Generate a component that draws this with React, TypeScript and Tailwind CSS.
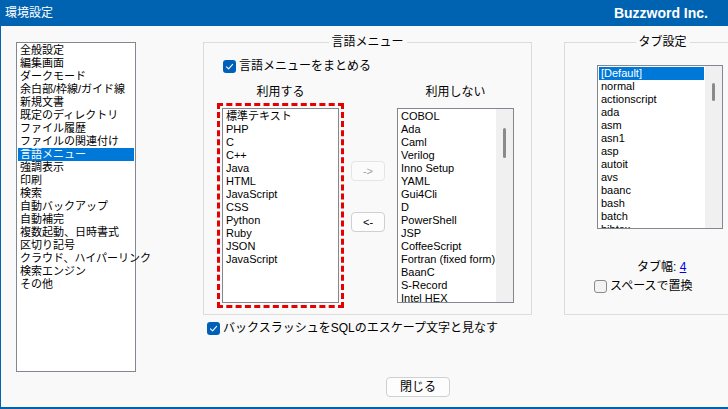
import { FC, ReactNode } from "react";

const FONT = "font-['Liberation_Sans','Noto_Sans_CJK_JP',sans-serif]";

const generalItems = [
  "全般設定",
  "編集画面",
  "ダークモード",
  "余白部/枠線/ガイド線",
  "新規文書",
  "既定のディレクトリ",
  "ファイル履歴",
  "ファイルの関連付け",
  "言語メニュー",
  "強調表示",
  "印刷",
  "検索",
  "自動バックアップ",
  "自動補完",
  "複数起動、日時書式",
  "区切り記号",
  "クラウド、ハイパーリンク",
  "検索エンジン",
  "その他",
];

const usedLangs = [
  "標準テキスト",
  "PHP",
  "C",
  "C++",
  "Java",
  "HTML",
  "JavaScript",
  "CSS",
  "Python",
  "Ruby",
  "JSON",
  "JavaScript",
];

const unusedLangs = [
  "COBOL",
  "Ada",
  "Caml",
  "Verilog",
  "Inno Setup",
  "YAML",
  "Gui4Cli",
  "D",
  "PowerShell",
  "JSP",
  "CoffeeScript",
  "Fortran (fixed form)",
  "BaanC",
  "S-Record",
  "Intel HEX",
];

const tabItems = [
  "[Default]",
  "normal",
  "actionscript",
  "ada",
  "asm",
  "asn1",
  "asp",
  "autoit",
  "avs",
  "baanc",
  "bash",
  "batch",
  "bibtex",
];

const CheckBox: FC<{ checked?: boolean }> = ({ checked }) =>
  checked ? (
    <span className="flex size-[13px] shrink-0 items-center justify-center rounded-[3px] bg-[#005fb8]">
      <svg width="9" height="9" viewBox="0 0 9 9" fill="none">
        <path d="M1.5 4.8 L3.6 6.8 L7.6 2.3" stroke="white" strokeWidth="1.1" strokeLinecap="round" strokeLinejoin="round" />
      </svg>
    </span>
  ) : (
    <span className="size-[13px] shrink-0 rounded-[3px] border border-[#8a8a8a] bg-[#f3f3f3]" />
  );

const ListItem: FC<{ label: string; selected?: boolean }> = ({ label, selected }) => (
  <div
    className={`h-[13px] whitespace-nowrap pl-[2px] leading-[13px] ${
      selected ? "bg-[#0078d7] text-white" : "text-black"
    }`}
  >
    {label}
  </div>
);

const ScrollList: FC<{ items: string[]; selected?: number; className: string; thumbTop: string; thumbHeight: string }> = ({
  items,
  selected,
  className,
  thumbTop,
  thumbHeight,
}) => (
  <div className={`flex overflow-hidden border border-[#828790] bg-white ${className}`}>
    <div className="min-w-0 flex-1 overflow-hidden p-[1px]">
      {items.map((item, i) => (
        <ListItem key={i} label={item} selected={i === selected} />
      ))}
    </div>
    <div className="w-[17px] shrink-0 bg-[#f0f0f0] pl-[7px]">
      <div className={`w-[3px] rounded-full bg-[#8a8a8a] ${thumbTop} ${thumbHeight}`} />
    </div>
  </div>
);

const GroupBox: FC<{ title: string; className: string; children: ReactNode }> = ({ title, className, children }) => (
  <div className={`relative shrink-0 border border-[#dcdcdc] ${className}`}>
    <span className="absolute -top-[7px] left-1/2 -translate-x-1/2 whitespace-nowrap bg-[#f9f9f9] px-[3px] text-[12px] leading-[13px]">
      {title}
    </span>
    {children}
  </div>
);

const SmallButton: FC<{ label: string; disabled?: boolean; className?: string }> = ({ label, disabled, className = "" }) => (
  <button
    className={`flex h-[20px] w-[34px] items-center justify-center rounded-[4px] border text-[11px] ${
      disabled ? "border-[#e5e5e5] bg-[#fbfbfb] text-[#a0a0a0]" : "border-[#d0d0d0] bg-[#fdfdfd] text-black"
    } ${className}`}
  >
    {label}
  </button>
);

const App: FC = () => {
  return (
    <div
      className={`flex h-[409px] w-[728px] flex-col overflow-hidden border-b-2 border-l border-[#0063b1] bg-[#f9f9f9] text-[11px] text-black ${FONT}`}
    >
      {/* title bar */}
      <div className="flex h-[26px] shrink-0 items-center justify-between bg-[#0063b1] pl-[4px] pr-[20px] text-white">
        <span className="text-[12px] leading-[13px]">環境設定</span>
        <span className="text-[14px] font-bold leading-[16px]">Buzzword Inc.</span>
      </div>

      <div className="flex flex-col pt-[16px]">
        <div className="flex items-start">
          {/* category list */}
          <div className="ml-[15px] h-[330px] w-[120px] shrink-0 border border-[#828790] bg-white p-[1px] text-[11px]">
            {generalItems.map((item, i) => (
              <ListItem key={item} label={item} selected={i === 8} />
            ))}
          </div>

          {/* language menu */}
          <div className="ml-[67px] flex shrink-0 flex-col">
            <GroupBox title="言語メニュー" className="h-[273px] w-[329px]">
              <div className="ml-[19px] mt-[17px] flex items-center gap-[3px]">
                <CheckBox checked />
                <span className="text-[12px] leading-[13px]">言語メニューをまとめる</span>
              </div>

              <div className="ml-[13px] mt-[13px] flex items-start">
                <div className="flex w-[127px] flex-col items-center">
                  <span className="text-[12px] leading-[13px]">利用する</span>
                  <div className="mt-[4px] border-[3px] border-dashed border-[#e60000] p-[2px]">
                    <div className="h-[195px] w-[117px] overflow-hidden border border-[#828790] bg-white p-[1px]">
                      {usedLangs.map((item, i) => (
                        <ListItem key={i} label={item} />
                      ))}
                    </div>
                  </div>
                </div>

                <div className="ml-[7px] flex flex-col">
                  <SmallButton label="->" disabled className="mt-[75px]" />
                  <SmallButton label="<-" className="mt-[31px]" />
                </div>

                <div className="ml-[12px] flex w-[117px] flex-col items-center">
                  <span className="text-[12px] leading-[13px]">利用しない</span>
                  <ScrollList
                    items={unusedLangs}
                    className="mt-[9px] h-[195px] w-[117px]"
                    thumbTop="mt-[19px]"
                    thumbHeight="h-[30px]"
                  />
                </div>
              </div>
            </GroupBox>

            <div className="ml-[4px] mt-[7px] flex items-center gap-[3px]">
              <CheckBox checked />
              <span className="text-[12px] leading-[13px]">バックスラッシュをSQLのエスケープ文字と見なす</span>
            </div>
          </div>

          {/* tab settings */}
          <GroupBox title="タブ設定" className="ml-[32px] h-[273px] w-[197px]">
            <ScrollList
              items={tabItems}
              selected={0}
              className="ml-[32px] mt-[22px] h-[164px] w-[126px]"
              thumbTop="mt-[17px]"
              thumbHeight="h-[18px]"
            />
            <div className="ml-[72px] mt-[32px] text-[12px] leading-[13px]">
              タブ幅: <span className="text-[#0000ee] underline">4</span>
            </div>
            <div className="ml-[29px] mt-[6px] flex items-center gap-[3px]">
              <CheckBox />
              <span className="text-[12px] leading-[13px]">スペースで置換</span>
            </div>
          </GroupBox>
        </div>

        <button className="ml-[385px] mt-[5px] flex h-[20px] w-[64px] items-center justify-center rounded-[4px] border border-[#d0d0d0] bg-[#fdfdfd] text-[12px]">
          閉じる
        </button>
      </div>
    </div>
  );
};

export default App;
